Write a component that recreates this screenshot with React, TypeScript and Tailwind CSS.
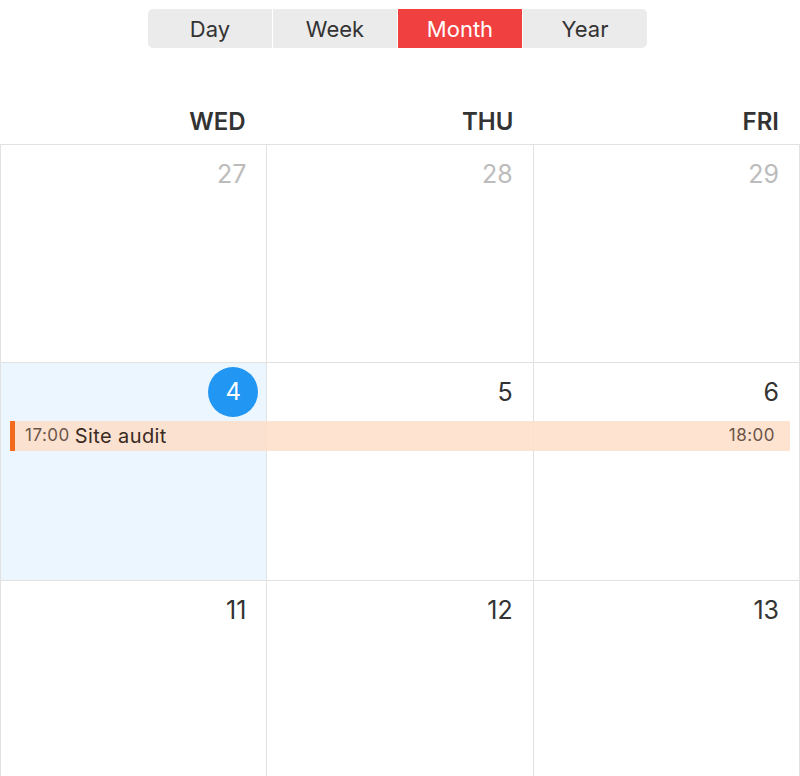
import { useState } from "react";

const views = ["Day", "Week", "Month", "Year"];

const weeks = [
  [
    { n: 27, muted: true },
    { n: 28, muted: true },
    { n: 29, muted: true },
  ],
  [{ n: 4, today: true }, { n: 5 }, { n: 6 }],
  [{ n: 11 }, { n: 12 }, { n: 13 }],
];

type Day = { n: number; muted?: boolean; today?: boolean };

function DayCell({ day }: { day: Day }) {
  return (
    <div
      className={`h-[218px] border-r border-b border-[#e2e2e2] ${
        day.today ? "bg-[#ecf6fe]" : "bg-white"
      }`}
    >
      {day.today ? (
        <div className="flex justify-end pt-[4px] pr-[8px]">
          <div className="flex h-[50px] w-[50px] items-center justify-center rounded-full bg-[#2196f3] text-[24px] text-white">
            {day.n}
          </div>
        </div>
      ) : (
        <div
          className={`pt-[14px] pr-[20px] text-right text-[25px] leading-[30px] ${
            day.muted ? "text-[#bcbcbc]" : "text-[#333333]"
          }`}
        >
          {day.n}
        </div>
      )}
    </div>
  );
}

export default function App() {
  const [view, setView] = useState("Month");

  return (
    <div className="h-[776px] w-[800px] overflow-hidden bg-white font-['Inter',sans-serif]">
      <div className="flex justify-center pt-[9px] pr-[5px]">
        <div className="flex gap-px overflow-hidden rounded-[5px]">
          {views.map((v) => (
            <button
              key={v}
              onClick={() => setView(v)}
              className={`h-[39px] w-[124px] pt-px text-[22px] ${
                v === view ? "bg-[#f04040] text-white" : "bg-[#ebebeb] text-[#333333]"
              }`}
            >
              {v}
            </button>
          ))}
        </div>
      </div>

      <div className="grid grid-cols-3 pt-[59px] pb-[8px] text-[24px] font-semibold leading-[29px] text-[#333333]">
        <div className="pr-[21px] text-right">WED</div>
        <div className="pr-[20px] text-right">THU</div>
        <div className="pr-[21px] text-right">FRI</div>
      </div>

      <div className="border-t border-l border-[#e2e2e2]">
        {weeks.map((week, i) => (
          <div key={i} className="relative grid grid-cols-3">
            {week.map((d) => (
              <DayCell key={d.n} day={d} />
            ))}
            {i === 1 && (
              <div className="absolute top-[58px] right-[10px] left-[9px] flex h-[30px] items-center bg-[#fde0cb]/90 pr-[15px]">
                <div className="h-full w-[5px] bg-[#f26b1d]" />
                <span className="ml-[10px] text-[17px] tracking-[0.5px] text-[#6b5548]">17:00</span>
                <span className="ml-[5px] text-[20px] tracking-[0.4px] text-[#3a2a22]">Site audit</span>
                <span className="ml-auto text-[17px] tracking-[0.5px] text-[#6b5548]">18:00</span>
              </div>
            )}
          </div>
        ))}
      </div>
    </div>
  );
}
